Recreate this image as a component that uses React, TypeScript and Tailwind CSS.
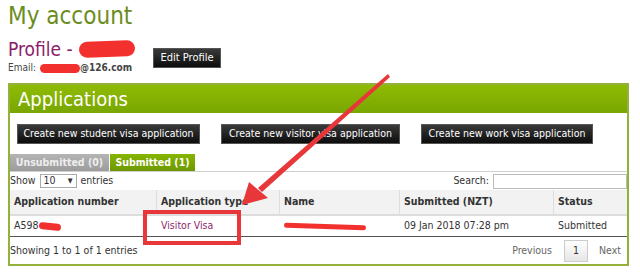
import React from "react";

const font = { fontFamily: '"DejaVu Sans Condensed", "DejaVu Sans", Verdana, sans-serif', fontStretch: "condensed" };

function Scribble({ className }: { className: string }) {
  return <span className={`inline-block rounded-full bg-[#f2312f] align-middle ${className}`} />;
}

function BlackButton({ label, className = "" }: { label: string; className?: string }) {
  return (
    <span
      className={`inline-flex h-[20px] items-center justify-center whitespace-nowrap border border-[#555] bg-gradient-to-b from-[#3a3a3a] to-[#0d0d0d] px-[10px] text-[10.5px] text-white ${className}`}
    >
      {label}
    </span>
  );
}

export default function App() {
  return (
    <div className="relative h-[275px] w-[640px] overflow-hidden bg-white text-[#333]" style={font}>
      <div className="px-[8px]">
        <h1 className="pt-[2px] text-[24px] leading-[28px] text-[#6b8d1e]">My account</h1>

        <div className="mt-[8px] flex items-start">
          <div className="w-[145px]">
            <div className="flex items-center text-[19px] leading-[22px] text-[#8c1c6a]">
              Profile -<Scribble className="ml-[6px] h-[16px] w-[56px] -rotate-2" />
            </div>
            <div className="mt-[2px] flex items-center text-[10px] leading-[12px] text-[#444]">
              Email:<Scribble className="ml-[4px] h-[9px] w-[40px]" />
              <span className="font-bold">@126.com</span>
            </div>
          </div>
          <BlackButton label="Edit Profile" className="mt-[10px] h-[18px] w-[68px] px-0 text-[11px]" />
        </div>

        <div className="mt-[9px] w-[621px] border-2 border-[#94b13c]">
          <div className="flex h-[28px] items-center bg-gradient-to-b from-[#8fbb05] to-[#79a600] pl-[8px] text-[20px] text-white">
            Applications
          </div>

          <div className="flex gap-[21px] pl-[7px] pt-[11px]">
            <BlackButton label="Create new student visa application" className="w-[183px]" />
            <BlackButton label="Create new visitor visa application" className="w-[179px]" />
            <BlackButton label="Create new work visa application" className="w-[172px]" />
          </div>

          <div className="mt-[10px] flex h-[18px] items-stretch border-b border-[#cfcfcf] text-[10.5px] font-bold">
            <span className="flex w-[99px] items-center justify-center whitespace-nowrap bg-gradient-to-b from-[#b4b4b4] to-[#9c9c9c] text-[#eeeeee]">
              Unsubmitted (0)
            </span>
            <span className="ml-[1px] flex w-[85px] items-center justify-center whitespace-nowrap bg-gradient-to-b from-[#86b500] to-[#6d9800] text-white">
              Submitted (1)
            </span>
          </div>

          <div className="flex h-[18px] items-center text-[10.5px] text-[#333]">
            <span>Show</span>
            <span className="mx-[4px] flex h-[14px] w-[37px] items-center justify-between border border-[#aaa] px-[3px]">
              10<span className="text-[7px]">▼</span>
            </span>
            <span>entries</span>
            <span className="ml-auto mr-[4px]">Search:</span>
            <span className="h-[15px] w-[134px] border border-[#bbb] bg-white" />
          </div>

          <div className="grid grid-cols-[147px_123px_120px_154px_1fr] text-[10.5px]">
            <div className="flex h-[26px] items-center border-b-2 border-r border-[#ddd] bg-[#f2f2f2] pl-[4px] font-bold">Application number</div>
            <div className="flex h-[26px] items-center border-b-2 border-r border-[#ddd] bg-[#f2f2f2] pl-[4px] font-bold">Application type</div>
            <div className="flex h-[26px] items-center border-b-2 border-r border-[#ddd] bg-[#f2f2f2] pl-[4px] font-bold">Name</div>
            <div className="flex h-[26px] items-center border-b-2 border-r border-[#ddd] bg-[#f2f2f2] pl-[4px] font-bold">Submitted (NZT)</div>
            <div className="flex h-[26px] items-center border-b-2 border-[#ddd] bg-[#f2f2f2] pl-[4px] font-bold">Status</div>

            <div className="flex h-[21px] items-center border-b border-[#555] pl-[4px]">
              A598<Scribble className="h-[7px] w-[22px] rotate-6" />
            </div>
            <div className="flex h-[21px] items-center border-b border-[#555] pl-[4px] text-[#8c2a6e]">Visitor Visa</div>
            <div className="flex h-[21px] items-center border-b border-[#555] pl-[4px]">
              <Scribble className="h-[5px] w-[82px] rotate-2" />
            </div>
            <div className="flex h-[21px] items-center border-b border-[#555] pl-[4px]">09 Jan 2018 07:28 pm</div>
            <div className="flex h-[21px] items-center border-b border-[#555] pl-[4px]">Submitted</div>
          </div>

          <div className="flex h-[27px] items-center text-[10.5px] text-[#333]">
            <span>Showing 1 to 1 of 1 entries</span>
            <span className="ml-auto text-[#666]">Previous</span>
            <span className="ml-[12px] flex h-[22px] w-[24px] items-center justify-center border border-[#ccc] bg-gradient-to-b from-white to-[#e6e6e6]">
              1
            </span>
            <span className="ml-[11px] mr-[6px] text-[#666]">Next</span>
          </div>
        </div>
      </div>

      <svg className="pointer-events-none absolute left-0 top-0" width="640" height="275">
        <rect x="145" y="212" width="94" height="31" fill="none" stroke="#e8373a" strokeWidth="4" />
        <polygon points="388,74 390,77 262,192 258,188" fill="#e8373a" />
        <polygon points="242,205 249,182 268,198" fill="#e8373a" />
      </svg>
    </div>
  );
}
